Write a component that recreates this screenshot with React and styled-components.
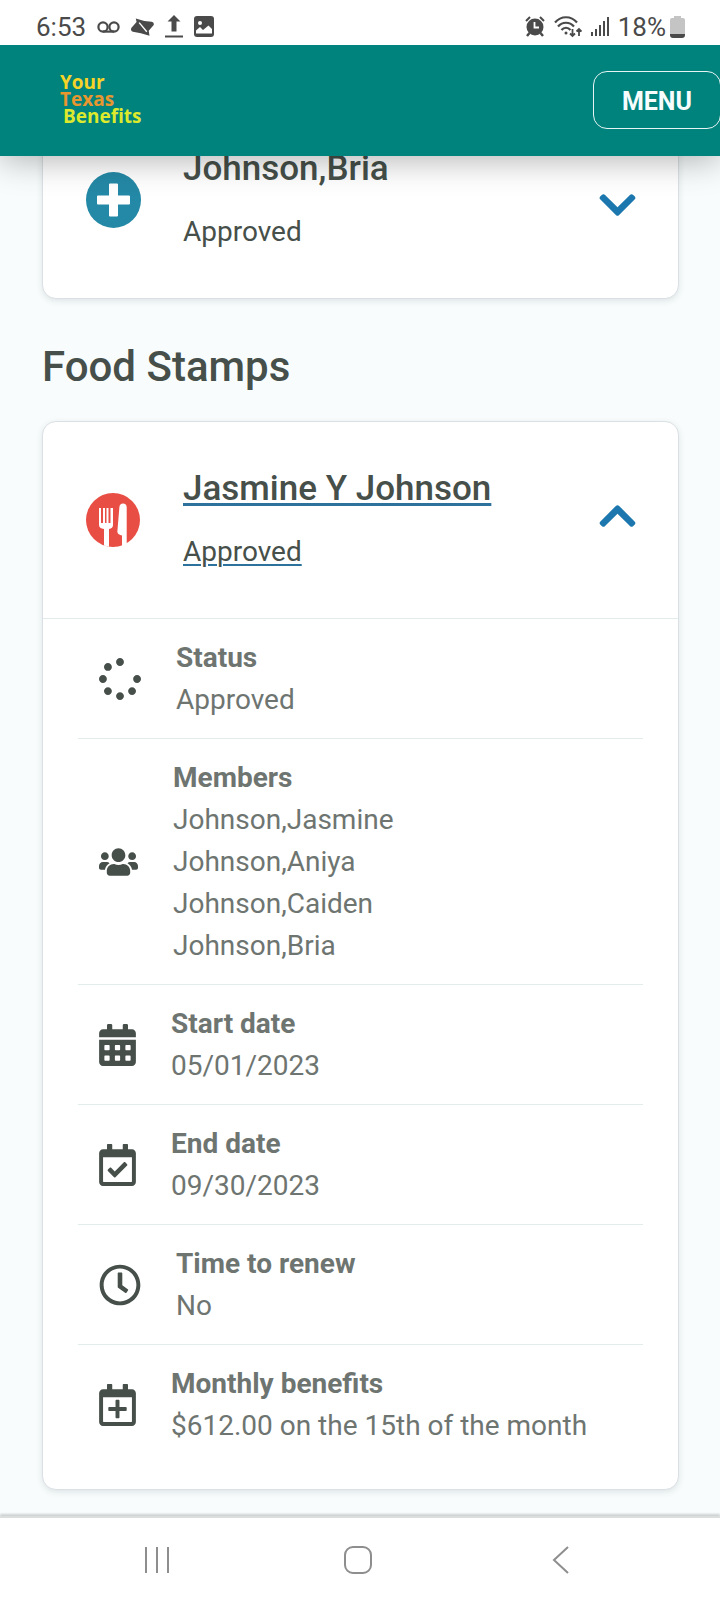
import React, { useState } from 'react';
import styled, { createGlobalStyle } from 'styled-components';
import {
  FaCalendarAlt,
  FaChevronDown,
  FaRegCalendarCheck,
  FaRegCalendarPlus,
  FaRegClock,
  FaSpinner,
  FaUsers
} from 'react-icons/fa';

const GlobalStyle = createGlobalStyle`
  * {
    box-sizing: border-box;
  }

  body {
    margin: 0;
    background-color: #f8fcfd;
    color: #464f49;
    font-family: Roboto, "Liberation Sans", sans-serif;
  }
`;

const Page = styled.div`
  display: flex;
  flex-direction: column;
  min-height: 100vh;
  overflow-x: hidden;
`;

// Phone status bar
const StatusBar = styled.div`
  display: flex;
  align-items: center;
  justify-content: space-between;
  height: 45px;
  padding: 8px 35px 0 36px;
  background-color: #fff;
  color: #4a4a4a;
  position: relative;
  z-index: 3;
`;

const StatusGroup = styled.div`
  display: flex;
  align-items: center;
  gap: ${({ $gap }) => $gap}px;
`;

const StatusText = styled.span`
  font-size: 26px;
  line-height: 32px;
  font-weight: 400;
`;

// App header
const Header = styled.header`
  display: flex;
  align-items: center;
  justify-content: space-between;
  height: 111px;
  padding: 0 0 2px 60px;
  background-color: #00837d;
  box-shadow: 0 4px 32px rgba(0, 0, 0, 0.3);
  position: relative;
  z-index: 2;
`;

const Logo = styled.a`
  display: flex;
  flex-direction: column;
  font-family: "Open Sans", sans-serif;
  font-size: 19px;
  line-height: 17px;
  font-weight: 700;
  text-decoration: none;
`;

const LogoWord = styled.span`
  color: ${({ $color }) => $color};
  padding-left: ${({ $indent }) => ($indent ? '3px' : '0')};
`;

const MenuButton = styled.button`
  height: 58px;
  padding: 3px 28px 0;
  margin-right: -1px;
  border: 1px solid #e6f5f4;
  border-radius: 14px;
  background: transparent;
  color: #f7fcfd;
  font-family: inherit;
  font-size: 25px;
  font-weight: 700;
  cursor: pointer;
`;

// The list is scrolled a little under the header
const Content = styled.main`
  flex: 1;
  margin-top: -55px;
  padding: 0 41px 23px 42px;
`;

const SectionTitle = styled.h1`
  margin: 43px 0 29px;
  font-size: 42px;
  line-height: 50px;
  font-weight: 500;
`;

const Card = styled.section`
  background-color: #fff;
  border: 1px solid #dbe0e4;
  border-radius: 14px;
  box-shadow: 0 2px 6px rgba(30, 60, 60, 0.12);
`;

const CardHeader = styled.button`
  display: flex;
  align-items: center;
  width: 100%;
  gap: 42px;
  padding: 41px 42px 41px 43px;
  border: none;
  background: transparent;
  color: inherit;
  font-family: inherit;
  text-align: left;
  cursor: pointer;
`;

const CardTitles = styled.span`
  display: flex;
  flex: 1;
  flex-direction: column;
  align-items: flex-start;
  gap: 17px;
  padding: 1px 0 4px;
`;

const CardName = styled.span`
  font-size: 35px;
  line-height: 50px;
  font-weight: 500;
  text-decoration: ${({ $open }) => ($open ? 'underline 3px #2c729c' : 'none')};
  text-underline-offset: 3px;
`;

const CardStatus = styled.span`
  font-size: 28px;
  line-height: 42px;
  text-decoration: ${({ $open }) => ($open ? 'underline 2px #2c729c' : 'none')};
  text-underline-offset: 3px;
`;

const Chevron = styled.span`
  display: flex;
  padding-top: 9px;
  color: #1b77ae;
  transform: ${({ $open }) => ($open ? 'rotate(180deg)' : 'none')};

  svg {
    width: 37px;
    height: 42px;
  }
`;

const Details = styled.ul`
  list-style: none;
  margin: 0;
  padding: 0 35px 25px;
  border-top: 1px solid #e3ecec;
`;

const DetailRow = styled.li`
  display: flex;
  align-items: center;
  gap: 35px;
  padding: 18px 0 17px 21px;
  color: #6e7571;
  border-bottom: 1px solid #e3ecec;

  &:last-child {
    border-bottom: none;
  }
`;

// Each glyph keeps its own width, so the text column follows the icon
const RowIcon = styled.span`
  display: flex;
  flex: none;
  color: #464f49;

  svg {
    width: ${({ $width }) => $width}px;
    height: 42px;
  }
`;

const DetailText = styled.div`
  font-size: 28px;
  line-height: 42px;
`;

const DetailLabel = styled.strong`
  display: block;
  font-weight: 700;
`;

const DetailValue = styled.span`
  display: block;
`;

// Phone navigation bar
const NavBar = styled.nav`
  display: grid;
  grid-template-columns: repeat(3, 1fr);
  height: 82px;
  padding: 2px 59px 0 56px;
  background-color: #fff;
  box-shadow: 0 -2px 0 #dcdedd, 0 -4px 2px #cdd1d1;
  position: relative;
  z-index: 2;
`;

const NavButton = styled.button`
  display: flex;
  align-items: center;
  justify-content: center;
  padding: 0;
  border: none;
  background: transparent;
  color: #8e8e8e;
`;

const VoicemailIcon = () => (
  <svg width="23" height="12" viewBox="0 0 23 12" fill="none" stroke="currentColor" strokeWidth="2.2">
    <circle cx="6" cy="6" r="4.6" />
    <circle cx="17" cy="6" r="4.6" />
    <path d="M6 10.600h11" />
  </svg>
);

const HiddenIcon = () => (
  <svg width="23" height="18" viewBox="0 0 24 18">
    <path
      d="M5 0Q13 3 21.500 3.500Q24.400 4 23.700 7L18.500 13L19.300 18Q10 15 2 14Q-.8 13.500.3 10L5.800 3.800Z"
      fill="currentColor"
    />
    <path d="M8.500 4.500l8 9.500" stroke="#fff" strokeWidth="1.400" />
  </svg>
);

const UploadIcon = () => (
  <svg width="18" height="23" viewBox="0 0 18 23" fill="currentColor">
    <path d="M9 0l6.500 6.500H11.500v10h-5v-10H2.500z" />
    <path d="M0 20.500h18v2H0z" />
  </svg>
);

const PictureIcon = () => (
  <svg width="20" height="21" viewBox="0 0 20 21">
    <rect width="20" height="21" rx="3" fill="currentColor" />
    <circle cx="6" cy="7" r="2" fill="#fff" />
    <path d="M2 17.500v-3l4-3.500 3 3 5.500-4.500 3.500 3.500v4.500z" fill="#fff" />
  </svg>
);

const AlarmIcon = () => (
  <svg width="20" height="21" viewBox="0 0 20 21" fill="none" stroke="currentColor">
    <circle cx="10" cy="11" r="8.500" fill="currentColor" stroke="none" />
    <path d="M1 5l4-4M19 5l-4-4" strokeWidth="2" />
    <path d="M4.500 17l-2.500 3M15.500 17l2.500 3" strokeWidth="2.500" />
    <path d="M9.500 6v5.500h4.500" stroke="#fff" strokeWidth="1.800" />
  </svg>
);

const WifiIcon = () => (
  <svg width="28" height="22" viewBox="0 0 28 22" fill="none" stroke="currentColor" strokeWidth="2.2">
    <path d="M1 6.500C7-.5 17-.5 23 6.500" />
    <path d="M4 10.500c4.500-5 11.500-5 16 0" />
    <path d="M7.500 14c2.500-3 6.500-3 9 0" />
    <circle cx="12" cy="17" r="1.500" fill="currentColor" stroke="none" />
    <path d="M18.500 13v7M16 17.500l2.500 2.500 2.500-2.500M25 20v-7M22.500 15.500l2.500-2.500 2.500 2.500" strokeWidth="1.800" />
  </svg>
);

const SignalIcon = () => (
  <svg width="18" height="21" viewBox="0 0 18 21" fill="currentColor">
    <rect y="16" width="2" height="4" />
    <rect x="4" y="13" width="2" height="7" />
    <rect x="8" y="9" width="2" height="11" />
    <rect x="12" y="5" width="2" height="15" />
    <rect x="16" y="1" width="2" height="19" />
  </svg>
);

const BatteryIcon = () => (
  <svg width="15" height="22" viewBox="0 0 15 22">
    <path d="M4 0h7v2h2a2 2 0 0 1 2 2v14H0V4a2 2 0 0 1 2-2h2z" fill="#c4c4c4" />
    <path d="M0 18h15v1a3 3 0 0 1-3 3H3a3 3 0 0 1-3-3z" fill="#4a4a4a" />
  </svg>
);

const MedicalIcon = () => (
  <svg width="55" height="56" viewBox="0 0 55 56">
    <ellipse cx="27.500" cy="28" rx="27.500" ry="28" fill="#2489a6" />
    <path d="M23 12.500q0-1 1-1h7q1 0 1 1v11h11q1 0 1 1v7q0 1-1 1H32v11q0 1-1 1h-7q-1 0-1-1v-11H12q-1 0-1-1v-7q0-1 1-1h11z" fill="#fff" />
  </svg>
);

const FoodIcon = () => (
  <svg width="55" height="54" viewBox="0 0 55 54">
    <circle cx="27" cy="27" r="27" fill="#e94e45" />
    <path d="M13 15h2v15h2V15h2v15h1.500V15h2v15h2V15H27v17q0 3.500-4 4v17.700l-5-1.200V36q-5-.5-5-4z" fill="#fff" />
    <path d="M37 10.500c2.400 0 3.700 1.300 3.700 4v36.800L36 52.900V42.500c-2.500-.5-5-1.500-4.600-4.500l2-24c.2-2.300 1.500-3.500 3.600-3.500z" fill="#fff" />
  </svg>
);

const details = [
  { label: 'Status', values: ['Approved'], icon: <FaSpinner />, iconWidth: 42 },
  {
    label: 'Members',
    values: ['Johnson,Jasmine', 'Johnson,Aniya', 'Johnson,Caiden', 'Johnson,Bria'],
    icon: <FaUsers />,
    iconWidth: 39
  },
  { label: 'Start date', values: ['05/01/2023'], icon: <FaCalendarAlt />, iconWidth: 37 },
  { label: 'End date', values: ['09/30/2023'], icon: <FaRegCalendarCheck />, iconWidth: 37 },
  { label: 'Time to renew', values: ['No'], icon: <FaRegClock />, iconWidth: 42 },
  {
    label: 'Monthly benefits',
    values: ['$612.00 on the 15th of the month'],
    icon: <FaRegCalendarPlus />,
    iconWidth: 37
  }
];

const BenefitCard = ({ name, status, icon, rows, defaultOpen }) => {
  const [open, setOpen] = useState(Boolean(defaultOpen));

  return (
    <Card>
      <CardHeader type="button" aria-expanded={open} onClick={() => setOpen(!open)}>
        {icon}
        <CardTitles>
          <CardName $open={open}>{name}</CardName>
          <CardStatus $open={open}>{status}</CardStatus>
        </CardTitles>
        <Chevron $open={open}>
          <FaChevronDown />
        </Chevron>
      </CardHeader>
      {open && rows && (
        <Details>
          {rows.map((row) => (
            <DetailRow key={row.label}>
              <RowIcon $width={row.iconWidth}>{row.icon}</RowIcon>
              <DetailText>
                <DetailLabel>{row.label}</DetailLabel>
                {row.values.map((value) => (
                  <DetailValue key={value}>{value}</DetailValue>
                ))}
              </DetailText>
            </DetailRow>
          ))}
        </Details>
      )}
    </Card>
  );
};

const App = () => (
  <>
    <GlobalStyle />
    <Page>
      <StatusBar>
        <StatusGroup $gap={11}>
          <StatusText>6:53</StatusText>
          <VoicemailIcon />
          <HiddenIcon />
          <UploadIcon />
          <PictureIcon />
        </StatusGroup>
        <StatusGroup $gap={9}>
          <AlarmIcon />
          <WifiIcon />
          <SignalIcon />
          <StatusGroup $gap={4}>
            <StatusText>18%</StatusText>
            <BatteryIcon />
          </StatusGroup>
        </StatusGroup>
      </StatusBar>
      <Header>
        <Logo href="#home">
          <LogoWord $color="#f5d327">Your</LogoWord>
          <LogoWord $color="#e8962e">Texas</LogoWord>
          <LogoWord $color="#dce92c" $indent>Benefits</LogoWord>
        </Logo>
        <MenuButton type="button">MENU</MenuButton>
      </Header>
      <Content>
        <BenefitCard name="Johnson,Bria" status="Approved" icon={<MedicalIcon />} />
        <SectionTitle>Food Stamps</SectionTitle>
        <BenefitCard
          name="Jasmine Y Johnson"
          status="Approved"
          icon={<FoodIcon />}
          rows={details}
          defaultOpen
        />
      </Content>
      <NavBar>
        <NavButton type="button" aria-label="Recent apps">
          <svg width="26" height="28" viewBox="0 0 26 28" stroke="currentColor" strokeWidth="2">
            <path d="M2 1v26M13 1v26M24 1v26" />
          </svg>
        </NavButton>
        <NavButton type="button" aria-label="Home">
          <svg width="28" height="28" viewBox="0 0 28 28" fill="none" stroke="currentColor" strokeWidth="2">
            <rect x="1" y="1" width="26" height="26" rx="8" />
          </svg>
        </NavButton>
        <NavButton type="button" aria-label="Back">
          <svg width="17" height="28" viewBox="0 0 17 28" fill="none" stroke="currentColor" strokeWidth="2">
            <path d="M16 1L2 14l14 13" />
          </svg>
        </NavButton>
      </NavBar>
    </Page>
  </>
);

export default App;
